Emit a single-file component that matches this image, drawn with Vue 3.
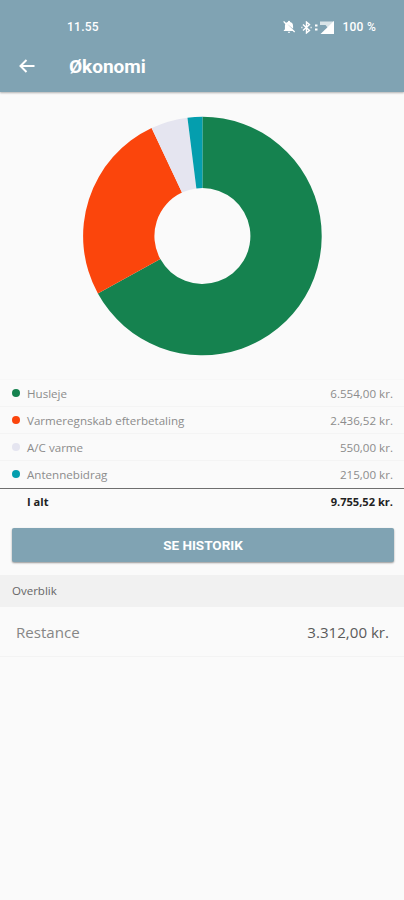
<template>
    <div class="screen">
        <header class="top">
            <div class="status-bar">
                <span class="clock">11.55</span>
                <div class="status-icons">
                    <svg class="bell" viewBox="0 0 24 24">
                        <path d="M12 22a2 2 0 0 0 2-2h-4a2 2 0 0 0 2 2zM19 15v-4.500c0-3.700-1.900-6.200-5.100-6.900V3a1.900 1.900 0 0 0-3.800 0v.6c-1.300.3-2.300.8-3.100 1.600zM5.600 7.200A8 8 0 0 0 5 10.500V16l-2 2v1h15.400l2.500 2.500 1.600-1.600L3.600 1.500 2 3.100z" />
                    </svg>
                    <svg class="bluetooth" viewBox="0 0 24 24">
                        <path d="M5.500 6.500l12 11-5.500 4.500v-20l5.500 4.500-12 11" />
                        <path d="M2.500 12h2M19.500 12h2" />
                    </svg>
                    <svg class="signal" viewBox="0 0 20 13">
                        <path d="M0 3.500h2.500v2H0zM0 7.500h2.500v2H0z" />
                        <path d="M19 0v13H5.500z" />
                        <path class="faded" d="M5 .5h14v3l-4 3h-2.500l-2-2.500H5z" />
                    </svg>
                    <span class="battery">100 %</span>
                </div>
            </div>
            <div class="title-bar">
                <svg class="back" viewBox="0 0 16 14">
                    <path d="M15.500 7H2M7.500 1L1.500 7l6 6" />
                </svg>
                <h1>Økonomi</h1>
            </div>
        </header>
        <div class="chart">
            <svg viewBox="0 0 240 240">
                <path v-for="s in slices" :key="s.color" :d="s.path" :fill="s.color" />
            </svg>
        </div>
        <ul class="posts">
            <li v-for="p in posts" :key="p.name" class="post">
                <i class="dot" :style="{ background: p.color }"></i>
                <span class="name">{{ p.name }}</span>
                <span class="amount">{{ format(p.amount) }}</span>
            </li>
            <li class="post total">
                <span class="name">I alt</span>
                <span class="amount">{{ format(total) }}</span>
            </li>
        </ul>
        <button class="history">SE HISTORIK</button>
        <h2>Overblik</h2>
        <div class="balance">
            <span class="label">Restance</span>
            <span class="value">{{ format(3312) }}</span>
        </div>
    </div>
</template>

<script setup>
// share is the whole percent used in the chart
const posts = [
    { name: 'Husleje', amount: 6554, share: 67, color: '#15824f' },
    { name: 'Varmeregnskab efterbetaling', amount: 2436.52, share: 26, color: '#fb450c' },
    { name: 'A/C varme', amount: 550, share: 5, color: '#e5e5f0' },
    { name: 'Antennebidrag', amount: 215, share: 2, color: '#049eae' },
];

const total = posts.reduce((sum, p) => sum + p.amount, 0);

const format = (n) => {
    const [whole, cents] = n.toFixed(2).split('.');
    return whole.replace(/\B(?=(\d{3})+$)/g, '.') + ',' + cents + ' kr.';
};

// point on a circle, percent goes clockwise from 12 o'clock
const point = (percent, r) => {
    const a = percent / 100 * 2 * Math.PI;
    return (120.4 + r * Math.sin(a)).toFixed(2) + ' ' + (120 - r * Math.cos(a)).toFixed(2);
};

const outer = 119.3;
const inner = 48;
let start = 0;
const slices = posts.map((p) => {
    const end = start + p.share;
    const large = p.share > 50 ? 1 : 0;
    const path = `M${point(start, outer)}A${outer} ${outer} 0 ${large} 1 ${point(end, outer)}`
        + `L${point(end, inner)}A${inner} ${inner} 0 ${large} 0 ${point(start, inner)}Z`;
    start = end;
    return { color: p.color, path };
});
</script>

<style>
body{
    margin: 0;
    background: #fafafa;
}
</style>
<style scoped>
.screen{
    width: 404px;
    height: 900px;
    overflow: hidden;
    background: #fafafa;
    font-family: 'Open Sans', 'Noto Sans', sans-serif;
}
.top{
    height: 92px;
    background: #80a3b3;
    color: #fff;
    font-family: Roboto, sans-serif;
    box-shadow: 0 1px 2px rgba(0,0,0,0.3);
}
.status-bar{
    display: flex;
    justify-content: space-between;
    align-items: center;
    height: 26px;
    padding: 14px 28px 0 67px;
    font-size: 12px;
    font-weight: 500;
    letter-spacing: 0.25px;
}
.status-icons{
    display: flex;
    align-items: center;
}
.status-icons svg{
    fill: #fff;
}
.bell{
    width: 14px;
    height: 14px;
}
.status-icons .bluetooth{
    width: 13px;
    height: 13px;
    margin-left: 4px;
    fill: none;
    stroke: #fff;
    stroke-width: 2.6;
}
.signal{
    width: 20px;
    height: 13px;
    margin-left: 2px;
}
.faded{
    opacity: 0.7;
}
.battery{
    margin-left: 7px;
}
.title-bar{
    display: flex;
    align-items: center;
    height: 52px;
    padding-left: 19px;
}
.back{
    width: 16px;
    height: 14px;
    fill: none;
    stroke: #fff;
    stroke-width: 2;
}
h1{
    margin: 0 0 0 34px;
    font-size: 19px;
    font-weight: 700;
}
.chart{
    padding: 24px 0 0 82px;
    height: 263px;
}
.chart svg{
    display: block;
    width: 240px;
    height: 240px;
}
.posts{
    margin: 0;
    padding: 0;
    border-top: 1px solid #f7f7f7;
    list-style: none;
}
.post{
    display: flex;
    align-items: center;
    box-sizing: border-box;
    height: 27px;
    padding: 0 11px 0 12px;
    border-bottom: 1px solid #f4f4f4;
    font-size: 11.6px;
    color: #8c8c8c;
}
.post:nth-child(4){
    height: 28px;
    padding-bottom: 1px;
    border-bottom: 1px solid #6e6e6e;
}
.dot{
    width: 8px;
    height: 8px;
    border-radius: 50%;
}
.name{
    margin-left: 7px;
}
.amount{
    margin-left: auto;
}
.total{
    padding-bottom: 3px;
    border-bottom: 0;
    font-size: 11.1px;
    font-weight: 700;
    color: #222;
}
.total .name{
    margin-left: 15px;
}
.history{
    display: block;
    width: 382px;
    height: 34px;
    margin: 12px 0 0 12px;
    padding: 0;
    border: 0;
    border-radius: 2px;
    background: #80a3b3;
    color: #fff;
    font: 700 13.5px Roboto, sans-serif;
    box-shadow: 0 1px 2px rgba(0,0,0,0.4);
}
h2{
    height: 32px;
    margin: 13px 0 0;
    padding-left: 12px;
    background: #f1f1f1;
    color: #666;
    font-size: 11.5px;
    font-weight: 400;
    line-height: 32px;
}
.balance{
    display: flex;
    justify-content: space-between;
    align-items: center;
    height: 49px;
    padding: 0 15px 0 16px;
    border-bottom: 1px solid #f3f3f3;
    font-size: 15.1px;
}
.label{
    color: #868686;
}
.value{
    color: #5a5a5a;
}
</style>
